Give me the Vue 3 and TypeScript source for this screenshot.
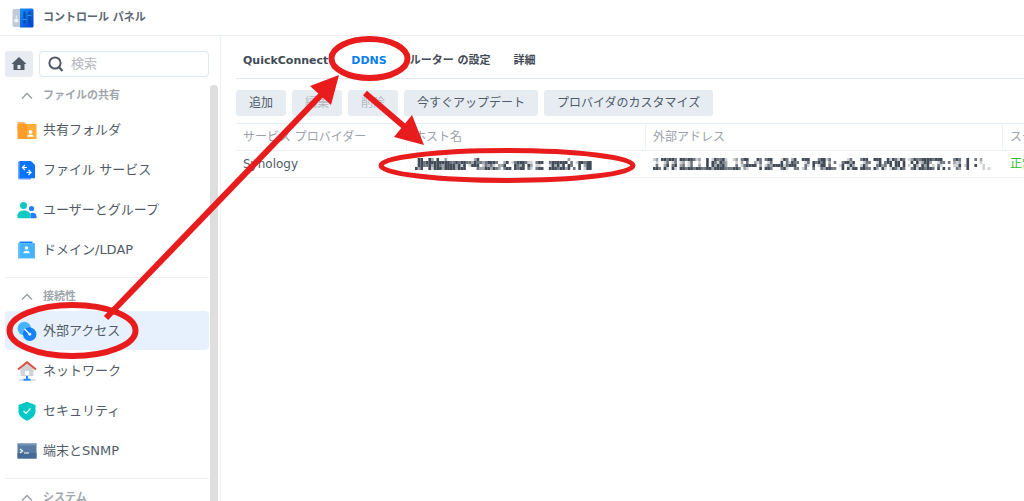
<script setup lang="ts">
import { ref } from 'vue'

interface Item { icon: string; label: string }
interface Group { title: string; items: Item[] }
interface Cell { x: number; y: number; o: number }

const groups: Group[] = [
  {
    title: 'ファイルの共有',
    items: [
      { icon: 'folder', label: '共有フォルダ' },
      { icon: 'file', label: 'ファイル サービス' },
      { icon: 'users', label: 'ユーザーとグループ' },
      { icon: 'domain', label: 'ドメイン/LDAP' },
    ],
  },
  {
    title: '接続性',
    items: [
      { icon: 'external', label: '外部アクセス' },
      { icon: 'network', label: 'ネットワーク' },
      { icon: 'security', label: 'セキュリティ' },
      { icon: 'terminal', label: '端末とSNMP' },
    ],
  },
  { title: 'システム', items: [] },
]

const tabs = ['QuickConnect', 'DDNS', 'ルーター の設定', '詳細']
const buttons = [
  { label: '追加', disabled: false },
  { label: '編集', disabled: true },
  { label: '削除', disabled: true },
  { label: '今すぐアップデート', disabled: false },
  { label: 'プロバイダのカスタマイズ', disabled: false },
]
const columns = ['サービス プロバイダー', 'ホスト名', '外部アドレス', 'ステータス']

const selected = ref('external')
const activeTab = ref('DDNS')
const query = ref('')

// Masked values: four rows of blocks per glyph, 0 (clear) to 4 (solid).
const hostMask = [
  '04/04/04/42', '40/43/43/40', '04/44/34/04', '20/44/24/14', '40/44/43/44', '02/44/24/24', '00/43/44/44', '00/34/42/42',
  '00/34/41/44', '000/433/401/400', '024/243/444/003', '00/32/01/22', '000/344/323/442', '000/430/102/432', '000/024/240/034',
  '00/01/00/40', '000/344/432/434', '000/431/404/403', '00/10/20/10', '000/344/110/344', '00/00/00/00', '000/344/142/444', '000/444/414/344',
  '020/403/043/240', '00/01/00/30', '000/443/402/401', '00/44/44/44',
]
const addressMask = [
  '120/010/030/443', '443/013/024/041', '443/013/034/041', '0/0/0/0', '443/120/230/443', '443/130/130/443', '120/010/020/443', '0/0/0/3',
  '40/40/40/44', '143/431/424/244', '341/432/342/443', '00/00/00/33', '120/010/030/443', '344/203/134/021', '000/002/444/000', '430/130/020/040',
  '344/013/132/443', '000/000/444/000', '143/403/413/341', '024/143/444/003', '00/30/00/30', '444/013/031/130', '000/043/040/030',
  '344/434/144/032', '130/020/030/443', '00/30/00/30', '000/034/140/040', '130/424/142/414', '00/00/00/40', '344/013/142/443',
  '00/30/00/30', '444/014/034/420', '004/034/230/410', '143/404/404/143', '143/404/404/143', '01/00/01/00', '243/404/042/341',
  '344/124/042/443', '443/420/401/443', '444/013/031/040', '00/30/00/40', '00/30/00/30', '343/212/114/032', '0040/0040/0140/0040', '03/00/04/00', '020/010/001/001', '000/000/000/010',
]

function toCells(glyphs: string[]): Cell[] {
  const cells: Cell[] = []
  let left = 0
  for (const glyph of glyphs) {
    const rows = glyph.split('/')
    rows.forEach((row, y) => {
      for (let i = 0; i < row.length; i++) {
        const level = Number(row[i])
        if (level > 0) cells.push({ x: (left + i) * 3, y: y * 3, o: level / 4 })
      }
    })
    left += rows[0].length
  }
  return cells
}
const hostCells = toCells(hostMask)
const addressCells = toCells(addressMask)
</script>

<template>
  <div class="window">
    <header class="titlebar">
      <svg class="app-icon" viewBox="0 0 22 20" aria-hidden="true">
        <defs>
          <linearGradient id="panel" x1="0" y1="0" x2="1" y2="1">
            <stop offset="0" stop-color="#1496ff" /><stop offset="1" stop-color="#063bcb" />
          </linearGradient>
        </defs>
        <path d="M2 1h7v18H2a1.500 1.500 0 0 1-1.500-1.500V2.500A1.500 1.500 0 0 1 2 1z" fill="#c4cad3" />
        <path d="M8 .5h12A1.500 1.500 0 0 1 21.500 2v16a1.500 1.500 0 0 1-1.500 1.500H8z" fill="url(#panel)" />
        <circle cx="4.300" cy="12.500" r="2.100" fill="#eef1f5" />
        <path d="M4.300 7.500v3" stroke="#eef1f5" />
        <path d="M12.500 3.500v12M17.500 3.500v12" stroke="#0646aa" stroke-width="2" />
        <path d="M10.700 11.500h3.600M15.700 7.500h3.600" stroke="#2a9cf0" stroke-width="1.200" />
      </svg>
      <h1>コントロール パネル</h1>
    </header>

    <div class="body">
      <aside class="sidebar">
        <div class="search-row">
          <button class="home" type="button" aria-label="ホーム">
            <svg viewBox="0 0 16 16" width="16" height="16">
              <path d="M8 1 15.500 8H13.500V14H2.500V8H.5z" fill="#505b67" />
              <path d="M6.500 9h3v4h-3z" fill="#e7ecf3" />
            </svg>
          </button>
          <label class="search">
            <svg viewBox="0 0 16 16" width="16" height="16" aria-hidden="true">
              <circle cx="7" cy="7" r="5.600" fill="none" stroke="#505b67" stroke-width="2" />
              <path d="m10.800 11 3.700 4" stroke="#505b67" stroke-width="2.200" />
            </svg>
            <input v-model="query" type="text" placeholder="検索" aria-label="検索" />
          </label>
        </div>

        <div class="scroll">
          <nav class="nav">
            <section v-for="group in groups" :key="group.title" class="group">
              <h2>
                <svg viewBox="0 0 12 8" width="12" height="8" aria-hidden="true">
                  <path d="m1 6.500 5-5 5 5" fill="none" stroke="#9aa1a9" stroke-width="1.500" />
                </svg>
                {{ group.title }}
              </h2>
              <a
                v-for="item in group.items"
                :key="item.icon"
                href="#"
                class="item"
                :class="{ active: selected === item.icon }"
                @click.prevent="selected = item.icon"
              >
                <svg viewBox="0 0 20 20" width="20" height="20" aria-hidden="true">
                  <g v-if="item.icon === 'folder'">
                    <path d="M.5 2h6.500l2 2H19v6H.5z" fill="#f9b266" />
                    <path d="M.5 4h18.800v15H.5z" fill="#ff9d28" />
                    <path d="M10 4h9.300v15H10z" fill="#ffad38" />
                    <circle cx="13.500" cy="12" r="1.900" fill="#fff" />
                    <path d="M10.200 16.800c0-3 6.600-3 6.600 0z" fill="#fff" />
                  </g>
                  <g v-else-if="item.icon === 'file'">
                    <path d="M1 1.500h13v18H2l-1-1z" fill="#70a8ff" />
                    <path d="M2.500 1h11.500l4 4v13.300H2.500z" fill="#0874ff" />
                    <path d="M8 5 5.500 7.500 8 10M5.800 7.500H10M11.500 10l2.500 2.500-2.500 2.500M13.700 12.500H9.500" fill="none" stroke="#fff" stroke-width="1.200" />
                  </g>
                  <g v-else-if="item.icon === 'users'">
                    <circle cx="6.500" cy="5.500" r="3.500" fill="#12c6c1" />
                    <path d="M.5 18.300v-3c0-6.500 13-6.500 13 0v3z" fill="#12c8c3" />
                    <circle cx="14.500" cy="8.500" r="2.600" fill="#237eff" />
                    <path d="M13.500 18.300v-5c2.500-1.500 6-.3 6 3v2z" fill="#237eff" />
                  </g>
                  <g v-else-if="item.icon === 'domain'">
                    <path d="M2.500 1.500h13v2h-13z" fill="#147dff" />
                    <path d="M1 3h17v15.500H1z" fill="#69bfff" />
                    <path d="M3 3.500h14.500V18H3z" fill="#45b3ff" />
                    <circle cx="9.500" cy="8" r="1.800" fill="#fff" />
                    <path d="M6.300 13.200c0-3.200 6.400-3.200 6.400 0z" fill="#fff" />
                  </g>
                  <g v-else-if="item.icon === 'external'">
                    <circle cx="7.300" cy="7.500" r="6.700" fill="#48b3ff" />
                    <circle cx="12.700" cy="13.200" r="6.700" fill="#1684ff" />
                    <path d="M6.500 11a6.700 6.700 0 0 1 7.200-4.300 6.700 6.700 0 0 1-7.400 7.400z" fill="#087afa" />
                    <path d="m7.500 8 5 5" stroke="#fff" stroke-width="1.200" />
                    <circle cx="12.800" cy="13.300" r="1.400" fill="#fff" />
                  </g>
                  <g v-else-if="item.icon === 'network'">
                    <path d="M3.500 7 10 2l6.500 5v8h-13z" fill="#d1d4d7" />
                    <path d="M1 8.500 10 1.200 19 8.500" fill="none" stroke="#dc5147" stroke-width="2" />
                    <path d="M8 10h4v4H8z" fill="#fff" />
                    <path d="M10 15v3" stroke="#238cff" stroke-width="2" />
                    <path d="M1.500 19h17" stroke="#b9c3cf" />
                    <path d="M6.500 18.700h7" stroke="#238cff" stroke-width="2" />
                  </g>
                  <g v-else-if="item.icon === 'security'">
                    <path d="M10 .8 18.500 4v6.500c0 4.500-4.500 7.500-8.500 9.200-4-1.700-8.500-4.700-8.500-9.200V4z" fill="#00c8c5" />
                    <path d="m6.500 10 2.500 2.400 4.500-5" fill="none" stroke="#fff" stroke-width="1.300" />
                  </g>
                  <g v-else>
                    <path d="M.5 2.500h19v15H.5z" fill="#587aa4" />
                    <path d="M.5 12h19v5.500H.5z" fill="#466a96" />
                    <path d="M.5 2.500h19v2H.5z" fill="#7593b5" />
                    <path d="m3 8 2.500 2L3 12M7 12h5" fill="none" stroke="#fff" stroke-width="1.200" />
                  </g>
                </svg>
                {{ item.label }}
              </a>
            </section>
          </nav>
          <div class="thumb"></div>
        </div>
      </aside>

      <main class="content">
        <div class="tabs" role="tablist">
          <button
            v-for="tab in tabs"
            :key="tab"
            type="button"
            role="tab"
            :aria-selected="activeTab === tab"
            @click="activeTab = tab"
          >{{ tab }}</button>
        </div>
        <div class="toolbar">
          <button v-for="b in buttons" :key="b.label" type="button" :disabled="b.disabled">{{ b.label }}</button>
        </div>
        <table>
          <colgroup><col class="c1" /><col class="c2" /><col class="c3" /><col class="c4" /></colgroup>
          <thead>
            <tr><th v-for="c in columns" :key="c" scope="col">{{ c }}</th></tr>
          </thead>
          <tbody>
            <tr>
              <td>Synology</td>
              <td>
                <svg class="mask host" viewBox="0 0 204 12" preserveAspectRatio="none" width="182" height="12" role="img" aria-label="ホスト名">
                  <rect v-for="(c, i) in hostCells" :key="i" :x="c.x" :y="c.y" width="3" height="3" :opacity="c.o" />
                </svg>
              </td>
              <td>
                <svg class="mask" viewBox="0 0 384 12" preserveAspectRatio="none" width="340" height="12" role="img" aria-label="外部アドレス">
                  <rect v-for="(c, i) in addressCells" :key="i" :x="c.x" :y="c.y" width="3" height="3" :opacity="c.o" />
                </svg>
              </td>
              <td class="ok">正常</td>
            </tr>
          </tbody>
        </table>
      </main>
    </div>

    <svg class="annotations" width="1024" height="501" viewBox="0 0 1024 501" aria-hidden="true">
      <g fill="none" stroke="#e81c1c" stroke-width="6">
        <ellipse cx="72.500" cy="330.500" rx="63" ry="25.500" />
        <ellipse cx="369.500" cy="58.500" rx="38" ry="19.500" />
        <ellipse cx="507" cy="165.500" rx="126" ry="15" stroke-width="5" />
        <path d="M106 318 322 94" />
        <path d="m365 93 42 36" />
      </g>
      <path d="M339 75 310 86 331 105z" fill="#e81c1c" />
      <path d="M424 145 412 115 394 137z" fill="#e81c1c" />
    </svg>
  </div>
</template>

<style>
html, body, #app { height: 100%; }
body { margin: 0; overflow: hidden; }
</style>

<style scoped>
.window {
  position: relative;
  display: flex;
  flex-direction: column;
  height: 100%;
  overflow: hidden;
  background: #fff;
  color: #505b67;
  font: 13px/20px "DejaVu Sans", "Noto Sans CJK JP", sans-serif;
}
button { border: 0; padding: 0; font: inherit; color: inherit; }
.titlebar {
  display: flex;
  align-items: center;
  flex: none;
  gap: 9px;
  height: 35px;
  padding-left: 12px;
  border-bottom: 1px solid #e9eef3;
}
.app-icon { width: 22px; height: 20px; }
h1 { margin: 0; color: #5c6670; font-size: 11px; font-weight: 700; }
.body { display: flex; flex: 1; min-height: 0; }
.sidebar {
  display: flex;
  flex-direction: column;
  flex: none;
  width: 220px;
  border-right: 1px solid #edf1f5;
}
.search-row { display: flex; gap: 6px; padding: 15px 11px 7px 5px; }
.home {
  display: grid;
  place-items: center;
  flex: none;
  width: 28px;
  height: 26px;
  border-radius: 3px;
  background: #e7ecf3;
}
.search {
  display: flex;
  align-items: center;
  flex: 1;
  gap: 7px;
  box-sizing: border-box;
  min-width: 0;
  height: 26px;
  padding-left: 8px;
  border: 1px solid #e0e8ef;
  border-radius: 4px;
}
.search svg { flex: none; }
.search input { width: 100%; min-width: 0; flex: 1; border: 0; padding: 0; outline: 0; background: none; font: inherit; }
.search input::placeholder { color: #b4b9be; opacity: 1; }
.scroll { display: flex; flex: 1; min-height: 0; overflow: hidden; }
.nav { flex: 1; padding-left: 5px; }
.thumb { width: 8px; margin: 1px 2px 0 1px; border-radius: 4px 4px 0 0; background: #dedede; }
.group { padding-bottom: 8px; }
.group + .group { padding-top: 7px; border-top: 1px solid #edf1f5; }
h2 {
  display: flex;
  align-items: center;
  gap: 10px;
  height: 24px;
  margin: 0 0 2px;
  padding-left: 16px;
  color: #a0a6ad;
  font-size: 11px;
  font-weight: 700;
}
.item {
  display: flex;
  align-items: center;
  gap: 6px;
  height: 39px;
  padding-left: 12px;
  border-radius: 4px;
  color: inherit;
  text-decoration: none;
}
.item + .item { margin-top: 1px; }
.item.active { background: #e6f1fd; }
.content { flex: 1; min-width: 0; overflow: hidden; padding-left: 15px; }
.tabs {
  display: flex;
  gap: 23px;
  height: 42px;
  padding: 0 7px;
  border-bottom: 1px solid #e3ebf2;
}
.tabs button { height: 50px; background: none; color: #414b55; font-size: 11px; font-weight: 700; }
.tabs button[aria-selected="true"] { color: #0a80ef; }
.toolbar { display: flex; gap: 6px; padding: 11px 0 7px; border-bottom: 1px solid #e3edf5; }
.toolbar button { height: 26px; padding: 0 13px; border-radius: 3px; background: #e7ecf3; font-size: 12px; }
.toolbar button:disabled { color: #b4bac2; }
table { width: 886px; table-layout: fixed; border-collapse: separate; border-spacing: 0; font-size: 12px; }
.c1 { width: 170px; }
.c2 { width: 239px; }
.c3 { width: 357px; }
.c4 { width: 120px; }
th, td { box-sizing: border-box; height: 27px; padding: 0 7px; border-bottom: 1px solid #f0f3f6; text-align: left; white-space: nowrap; }
th { color: #9ba1a8; font-weight: 400; }
th + th { border-left: 1px solid #f0f3f6; }
td + td { padding-left: 8px; }
.ok { color: #2fbd2f; }
.mask { display: block; fill: #414b57; }
.host { margin-left: 1px; }
.annotations { position: absolute; top: 0; left: 0; pointer-events: none; }
</style>
